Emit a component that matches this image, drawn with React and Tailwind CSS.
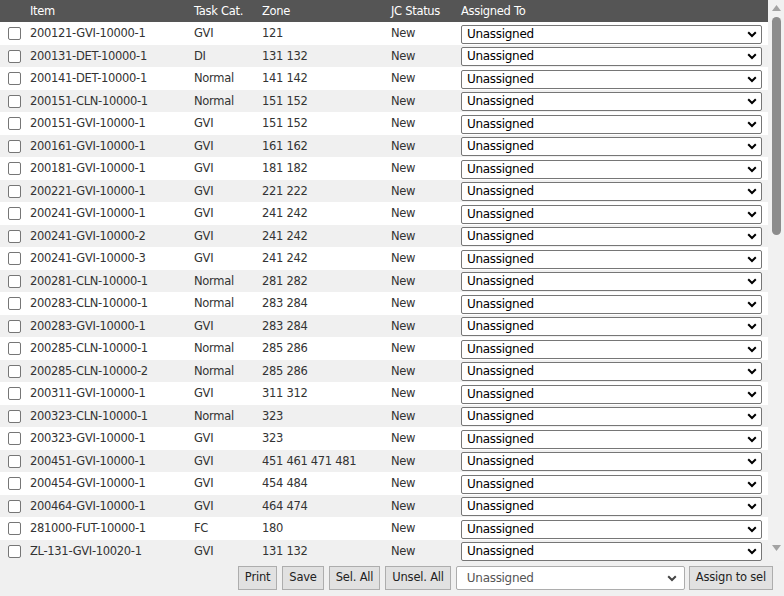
import React from 'react';

const ROWS = [
  ['200121-GVI-10000-1', 'GVI', '121'],
  ['200131-DET-10000-1', 'DI', '131 132'],
  ['200141-DET-10000-1', 'Normal', '141 142'],
  ['200151-CLN-10000-1', 'Normal', '151 152'],
  ['200151-GVI-10000-1', 'GVI', '151 152'],
  ['200161-GVI-10000-1', 'GVI', '161 162'],
  ['200181-GVI-10000-1', 'GVI', '181 182'],
  ['200221-GVI-10000-1', 'GVI', '221 222'],
  ['200241-GVI-10000-1', 'GVI', '241 242'],
  ['200241-GVI-10000-2', 'GVI', '241 242'],
  ['200241-GVI-10000-3', 'GVI', '241 242'],
  ['200281-CLN-10000-1', 'Normal', '281 282'],
  ['200283-CLN-10000-1', 'Normal', '283 284'],
  ['200283-GVI-10000-1', 'GVI', '283 284'],
  ['200285-CLN-10000-1', 'Normal', '285 286'],
  ['200285-CLN-10000-2', 'Normal', '285 286'],
  ['200311-GVI-10000-1', 'GVI', '311 312'],
  ['200323-CLN-10000-1', 'Normal', '323'],
  ['200323-GVI-10000-1', 'GVI', '323'],
  ['200451-GVI-10000-1', 'GVI', '451 461 471 481'],
  ['200454-GVI-10000-1', 'GVI', '454 484'],
  ['200464-GVI-10000-1', 'GVI', '464 474'],
  ['281000-FUT-10000-1', 'FC', '180'],
  ['ZL-131-GVI-10020-1', 'GVI', '131 132'],
];

const COLS = 'grid grid-cols-[30px_164px_68px_129px_70px_1fr] items-center';

function Chevron({ className }) {
  return (
    <svg className={className} width="10" height="7" viewBox="0 0 10 7" fill="none">
      <path d="M1.2 1.3 L5 5 L8.8 1.3" stroke="currentColor" strokeWidth="2" />
    </svg>
  );
}

function AssignSelect() {
  return (
    <div className="relative mr-[6px] mt-[1px] h-[19px]">
      <select
        defaultValue="Unassigned"
        className="w-full h-[19px] appearance-none bg-white border border-[#767676] rounded-[2px] pl-[5px] text-[12px] leading-[17px] tracking-[-0.3px] text-black outline-none"
      >
        <option>Unassigned</option>
      </select>
      <Chevron className="absolute right-[5px] top-[6px] text-black pointer-events-none" />
    </div>
  );
}

function Btn({ children }) {
  return (
    <button className="h-[24px] px-[6px] bg-[#e1e1e1] border border-[#adadad] text-[11.5px] tracking-[-0.2px] text-[#222]">
      {children}
    </button>
  );
}

export default function App() {
  return (
    <div
      className="w-[784px] h-[596px] flex flex-col bg-[#f0f0f0] overflow-hidden text-[11.5px] tracking-[-0.3px] text-[#333]"
      style={{ fontFamily: 'Tahoma, "DejaVu Sans", sans-serif' }}
    >
      <div className="flex h-[561px]">
        {/* table */}
        <div className="w-[768px] flex flex-col overflow-hidden bg-white">
          <div className={`${COLS} h-[22px] shrink-0 bg-[#555555] text-white pt-[1px]`}>
            <div />
            <div>Item</div>
            <div>Task Cat.</div>
            <div>Zone</div>
            <div>JC Status</div>
            <div>Assigned To</div>
          </div>
          {ROWS.map((r, i) => (
            <div
              key={r[0]}
              className={`${COLS} h-[22.5px] shrink-0 pt-[1px] ${i % 2 ? 'bg-[#f0f0f0]' : 'bg-white'}`}
            >
              <div className="pl-[8px] flex items-center">
                <span className="w-[13px] h-[13px] border border-[#767676] rounded-[2px] bg-white" />
              </div>
              <div>{r[0]}</div>
              <div>{r[1]}</div>
              <div>{r[2]}</div>
              <div>New</div>
              <AssignSelect />
            </div>
          ))}
        </div>

        {/* scrollbar */}
        <div className="w-[16px] bg-[#f1f1f1] flex flex-col items-center">
          <svg className="mt-[5px]" width="9" height="6" viewBox="0 0 9 6">
            <path d="M4.5 0 L9 6 L0 6 Z" fill="#a3a3a3" />
          </svg>
          <div className="mt-[6px] w-[9px] h-[218px] rounded-full bg-[#8c8c8c]" />
          <div className="flex-1" />
          <svg className="mb-[10px]" width="9" height="6" viewBox="0 0 9 6">
            <path d="M0 0 L9 0 L4.5 6 Z" fill="#a3a3a3" />
          </svg>
        </div>
      </div>

      {/* footer */}
      <div className="flex items-center justify-end gap-[5px] pr-[11px] pt-[5px]">
        <Btn>Print</Btn>
        <Btn>Save</Btn>
        <Btn>Sel. All</Btn>
        <Btn>Unsel. All</Btn>
        <div className="relative w-[229px] h-[24px] mr-[-1px]">
          <div className="w-full h-[24px] bg-white border border-[#adadad] rounded-[2px] pl-[10px] flex items-center text-[12px] text-[#555]">
            Unassigned
          </div>
          <Chevron className="absolute right-[8px] top-[9px] text-[#444]" />
        </div>
        <Btn>Assign to sel</Btn>
      </div>
    </div>
  );
}
